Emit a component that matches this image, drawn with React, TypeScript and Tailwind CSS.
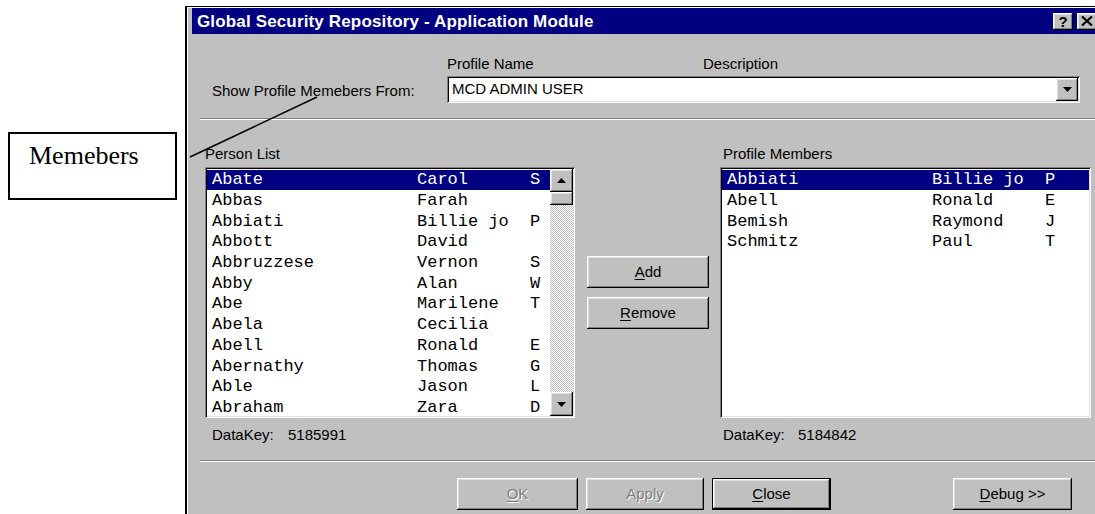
import React from "react";

const raised =
  "bg-[#c0c0c0] shadow-[inset_-1px_-1px_0_#000,inset_1px_1px_0_#fff,inset_-2px_-2px_0_#808080,inset_2px_2px_0_#dfdfdf]";
const sunken =
  "bg-white shadow-[inset_1px_1px_0_#808080,inset_-1px_-1px_0_#fff,inset_2px_2px_0_#000,inset_-2px_-2px_0_#dfdfdf]";

type Person = [string, string, string];

const people: Person[] = [
  ["Abate", "Carol", "S"],
  ["Abbas", "Farah", ""],
  ["Abbiati", "Billie jo", "P"],
  ["Abbott", "David", ""],
  ["Abbruzzese", "Vernon", "S"],
  ["Abby", "Alan", "W"],
  ["Abe", "Marilene", "T"],
  ["Abela", "Cecilia", ""],
  ["Abell", "Ronald", "E"],
  ["Abernathy", "Thomas", "G"],
  ["Able", "Jason", "L"],
  ["Abraham", "Zara", "D"],
];

const members: Person[] = [
  ["Abbiati", "Billie jo", "P"],
  ["Abell", "Ronald", "E"],
  ["Bemish", "Raymond", "J"],
  ["Schmitz", "Paul", "T"],
];

function Row({ p, selected }: { p: Person; selected: boolean }) {
  return (
    <div
      className={
        "grid grid-cols-[205px_113px_1fr] h-[20.7px] items-center pl-[5px] whitespace-pre font-['Liberation_Mono','Courier_New',monospace] text-[17px] leading-none " +
        (selected ? "bg-[#000080] text-white" : "text-black")
      }
    >
      <span>{p[0]}</span>
      <span>{p[1]}</span>
      <span>{p[2]}</span>
    </div>
  );
}

function Arrow({ down }: { down?: boolean }) {
  return (
    <svg width="9" height="5" viewBox="0 0 9 5">
      {down ? <polygon points="0,0 9,0 4.5,5" fill="#000" /> : <polygon points="0,5 9,5 4.5,0" fill="#000" />}
    </svg>
  );
}

function Btn({
  children,
  w,
  disabled,
  isDefault,
}: {
  children: React.ReactNode;
  w: string;
  disabled?: boolean;
  isDefault?: boolean;
}) {
  const face = (
    <div
      className={
        raised +
        " h-full w-full flex items-center justify-center text-[15px] " +
        (disabled ? "text-[#808080] [text-shadow:1px_1px_0_#fff]" : "text-black")
      }
    >
      {children}
    </div>
  );
  return isDefault ? (
    <div className={w + " h-[32px] border border-black"}>{face}</div>
  ) : (
    <div className={w + " h-[32px]"}>{face}</div>
  );
}

function Separator() {
  return <div className="ml-[8px] h-[2px] border-t border-t-[#808080] border-b border-b-white" />;
}

export default function App() {
  return (
    <div className="relative w-[1095px] h-[514px] overflow-hidden bg-white flex font-['Liberation_Sans',Arial,sans-serif]">
      {/* callout box on the left */}
      <div className="w-[185px] shrink-0 pt-[132px] pl-[8px]">
        <div className="w-[169px] h-[68px] border-2 border-black pt-[7px] pl-[19px] font-['Liberation_Serif','Times_New_Roman',serif] text-[26px] leading-[30px] text-black">
          Memebers
        </div>
      </div>

      {/* dialog window */}
      <div className="mt-[6px] w-[919px] h-[520px] shrink-0 border-l-2 border-t border-black">
        <div className="h-full border-l border-t border-white bg-[#c0c0c0] px-[4px]">
          {/* title bar */}
          <div className="h-[26px] bg-[#000080] flex items-center justify-between pl-[5px] pr-[3px]">
            <span className="text-white font-bold text-[17px] tracking-[0.15px] leading-none">
              Global Security Repository - Application Module
            </span>
            <div className="flex gap-[4px]">
              <div className={raised + " w-[20px] h-[17px] flex items-center justify-center text-[15px] font-bold leading-none text-black"}>
                ?
              </div>
              <div className={raised + " w-[20px] h-[17px] flex items-center justify-center"}>
                <svg width="12" height="10" viewBox="0 0 12 10">
                  <path d="M1 0.5 L11 9.5 M11 0.5 L1 9.5" stroke="#000" strokeWidth="2.2" />
                </svg>
              </div>
            </div>
          </div>

          {/* profile selector */}
          <div className="mt-[21px] h-[18px] flex text-[15px] leading-[18px] text-black">
            <div className="w-[255px]" />
            <div className="w-[256px]">Profile Name</div>
            <div>Description</div>
          </div>
          <div className="mt-[3px] flex items-center h-[27px]">
            <div className="w-[255px] pl-[20px] mt-[4px] text-[15px] text-black">Show Profile Memebers From:</div>
            <div className={sunken + " w-[633px] h-[27px] p-[2px] flex items-center"}>
              <span className="flex-1 pl-[3px] text-[15px] text-black">MCD ADMIN USER</span>
              <div className={raised + " w-[22px] h-full flex items-center justify-center"}>
                <Arrow down />
              </div>
            </div>
          </div>

          <div className="mt-[15px]">
            <Separator />
          </div>

          {/* lists */}
          <div className="flex pl-[13px]">
            <div className="w-[370px]">
              <div className="mt-[25px] h-[18px] text-[15px] leading-[18px] text-black">Person List</div>
              <div className={sunken + " mt-[4px] h-[251px] p-[2px] flex"}>
                <div className="flex-1 overflow-hidden pt-[0.5px]">
                  {people.map((p, i) => (
                    <Row key={p[0]} p={p} selected={i === 0} />
                  ))}
                </div>
                <div className="w-[23px] flex flex-col bg-[repeating-conic-gradient(#c0c0c0_0%_25%,#ffffff_0%_50%)] bg-[length:2px_2px]">
                  <div className={raised + " h-[23px] flex items-center justify-center"}>
                    <Arrow />
                  </div>
                  <div className={raised + " h-[13px]"} />
                  <div className="flex-1" />
                  <div className={raised + " h-[24px] flex items-center justify-center"}>
                    <Arrow down />
                  </div>
                </div>
              </div>
              <div className="mt-[8px] h-[18px] flex text-[15px] leading-[18px] text-black pl-[7px]">
                <span className="w-[76px]">DataKey:</span>
                <span>5185991</span>
              </div>
            </div>

            <div className="ml-[12px] w-[122px] pt-[136px] flex flex-col gap-[9px]">
              <Btn w="w-[122px]">
                <span className="underline underline-offset-2">A</span>dd
              </Btn>
              <Btn w="w-[122px]">
                <span className="underline underline-offset-2">R</span>emove
              </Btn>
            </div>

            <div className="ml-[11px] w-[371px]">
              <div className="mt-[25px] h-[18px] text-[15px] leading-[18px] text-black pl-[3px]">Profile Members</div>
              <div className={sunken + " mt-[4px] h-[251px] p-[2px]"}>
                <div className="h-full overflow-hidden pt-[0.5px]">
                  {members.map((p, i) => (
                    <Row key={p[0]} p={p} selected={i === 0} />
                  ))}
                </div>
              </div>
              <div className="mt-[8px] h-[18px] flex text-[15px] leading-[18px] text-black pl-[3px]">
                <span className="w-[75px]">DataKey:</span>
                <span>5184842</span>
              </div>
            </div>
          </div>

          <div className="mt-[16px]">
            <Separator />
          </div>

          {/* dialog buttons */}
          <div className="mt-[16px] flex pl-[265px] gap-[8px]">
            <Btn w="w-[121px]" disabled>
              <span className="underline underline-offset-2">O</span>K
            </Btn>
            <Btn w="w-[118px]" disabled>
              Apply
            </Btn>
            <Btn w="w-[119px]" isDefault>
              <span className="underline underline-offset-2">C</span>lose
            </Btn>
            <div className="ml-[114px]">
              <Btn w="w-[119px]">
                <span className="underline underline-offset-2">D</span>ebug &gt;&gt;
              </Btn>
            </div>
          </div>
        </div>
      </div>

      {/* callout leader line */}
      <svg className="absolute left-0 top-0 pointer-events-none" width="1095" height="514">
        <line x1="190" y1="157" x2="317" y2="97" stroke="#000" strokeWidth="1.5" />
      </svg>
    </div>
  );
}
